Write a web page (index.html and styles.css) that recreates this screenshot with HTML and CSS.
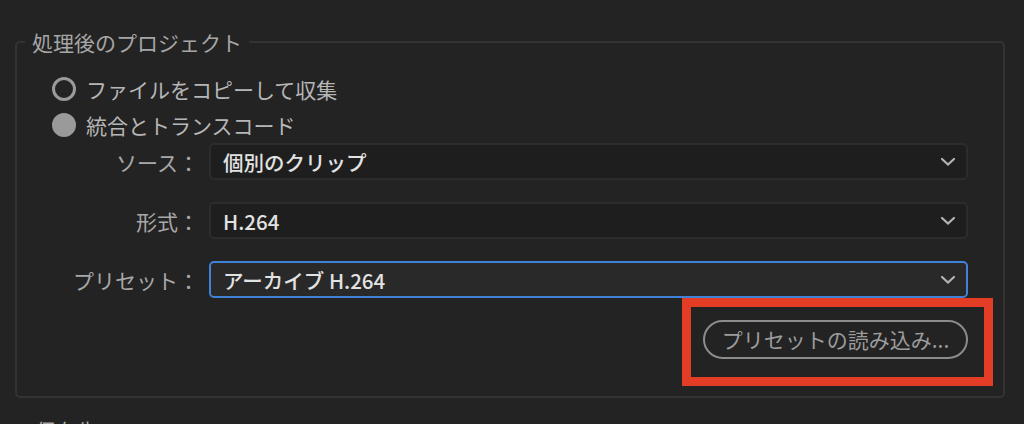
FILE: index.html
```html
<!DOCTYPE html>
<html lang="ja">
<head>
    <meta charset="UTF-8">
    <title>プロジェクトマネージャー</title>
    <link rel="stylesheet" href="styles.css">
</head>
<body>
    <fieldset class="group">
        <legend>処理後のプロジェクト</legend>

        <div class="radios">
            <label class="radio">
                <span class="dot"></span>
                ファイルをコピーして収集
            </label>
            <label class="radio checked">
                <span class="dot"></span>
                統合とトランスコード
            </label>
        </div>

        <div class="form">
            <div class="row">
                <span class="label">ソース：</span>
                <div class="select">
                    <span>個別のクリップ</span>
                    <svg class="chev" width="16" height="10" viewBox="0 0 16 10"><path d="M2 2 L8 7.5 L14 2" fill="none" stroke="#b4b4b4" stroke-width="2.2" stroke-linecap="round"/></svg>
                </div>
            </div>
            <div class="row">
                <span class="label">形式：</span>
                <div class="select">
                    <span>H.264</span>
                    <svg class="chev" width="16" height="10" viewBox="0 0 16 10"><path d="M2 2 L8 7.5 L14 2" fill="none" stroke="#b4b4b4" stroke-width="2.2" stroke-linecap="round"/></svg>
                </div>
            </div>
            <div class="row">
                <span class="label">プリセット：</span>
                <div class="select focus">
                    <span>アーカイブ H.264</span>
                    <svg class="chev" width="16" height="10" viewBox="0 0 16 10"><path d="M2 2 L8 7.5 L14 2" fill="none" stroke="#b4b4b4" stroke-width="2.2" stroke-linecap="round"/></svg>
                </div>
            </div>
        </div>

        <div class="actions">
            <div class="mark">
                <button class="pill">プリセットの読み込み...</button>
                <span class="highlight"></span>
            </div>
        </div>
    </fieldset>

    <div class="next">保存先</div>
</body>
</html>
```

FILE: styles.css
```css
body {
    margin: 0;
    padding: 30px 19px 0 15px;
    background: #232323;
    font-family: "Noto Sans CJK JP", "Noto Sans", sans-serif;
    color: #b4b4b4;
    overflow: hidden;
    height: 424px;
    box-sizing: border-box;
}
.group {
    margin: 0;
    border: 2px solid #333333;
    border-radius: 5px;
    padding: 17px 35px 0 35px;
    height: 368px;
    box-sizing: border-box;
}
.group legend {
    font-size: 21px;
    line-height: 24px;
    color: #a6a6a6;
    padding: 0 7px;
    margin-left: -27px;
}
.radios {
    display: flex;
    flex-direction: column;
}
.radio {
    display: flex;
    align-items: center;
    gap: 10px;
    height: 36px;
    font-size: 21px;
    color: #b6b6b6;
}
.dot {
    width: 18px;
    height: 18px;
    border: 3px solid #9a9a9a;
    border-radius: 50%;
}
.radio.checked .dot {
    background: #9a9a9a;
}
.form {
    display: flex;
    flex-direction: column;
    gap: 22px;
}
.row {
    display: flex;
    align-items: center;
    height: 37px;
}
.label {
    width: 147px;
    text-align: right;
    padding-right: 10px;
    font-size: 21px;
    color: #a8a8a8;
    white-space: nowrap;
}
.select {
    flex: 1;
    height: 37px;
    box-sizing: border-box;
    display: flex;
    align-items: center;
    justify-content: space-between;
    padding: 0 10px 0 12px;
    background: #1e1e1e;
    border: 2px solid #2c2c2c;
    border-radius: 5px;
    font-size: 20.5px;
    font-weight: 500;
    color: #e2e2e2;
}
.select.focus {
    background: #292929;
    border-color: #3f82d8;
}
.actions {
    display: flex;
    justify-content: flex-end;
    margin-top: 22px;
}
.mark {
    position: relative;
    display: flex;
}
.pill {
    height: 39px;
    width: 265px;
    background: transparent;
    border: 2px solid #8c8c8c;
    border-radius: 20px;
    font-family: inherit;
    font-size: 21px;
    color: #9c9c9c;
    padding: 0;
    line-height: 1;
}
.highlight {
    position: absolute;
    left: -21px;
    top: -22px;
    right: -25px;
    bottom: -27px;
    border: 9px solid #e43d25;
}
.next {
    margin: 17px 0 0 20px;
    font-size: 21px;
    color: #a6a6a6;
}
```
